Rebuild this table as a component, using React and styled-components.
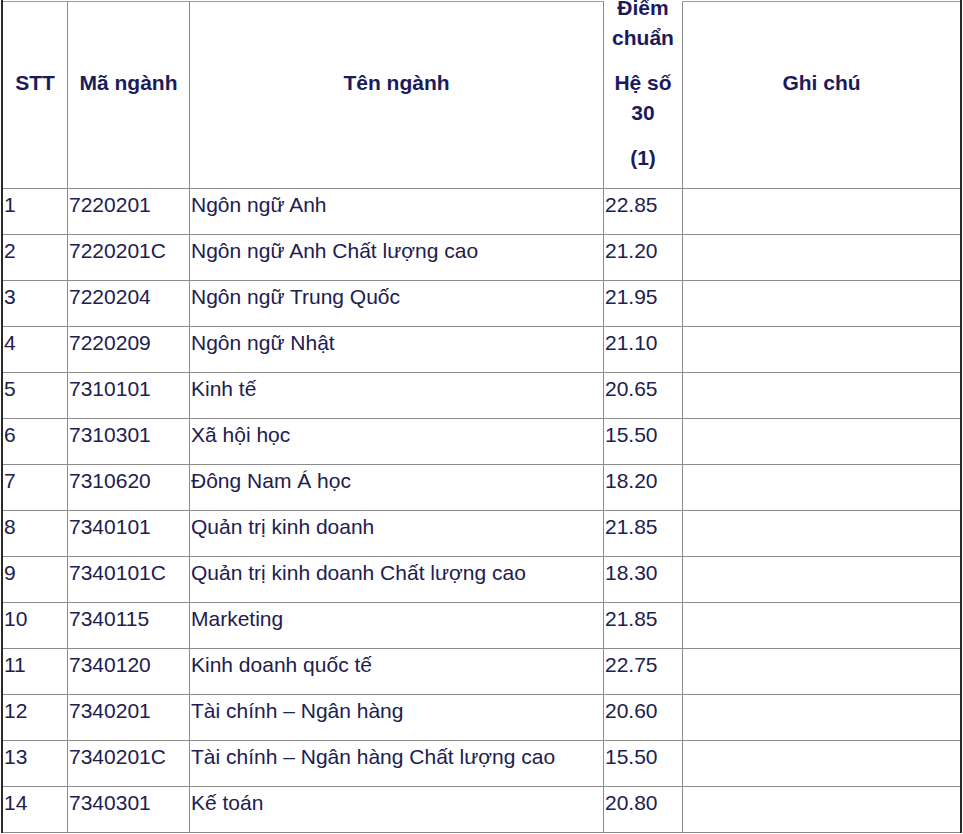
import React from "react";
import styled, { createGlobalStyle } from "styled-components";

const GlobalStyle = createGlobalStyle`
  html, body {
    margin: 0;
    padding: 0;
    background: #fff;
  }
  body {
    font-family: "Liberation Sans", Arial, sans-serif;
    overflow: hidden;
  }
`;

const rows = [
  ["1", "7220201", "Ngôn ngữ Anh", "22.85"],
  ["2", "7220201C", "Ngôn ngữ Anh Chất lượng cao", "21.20"],
  ["3", "7220204", "Ngôn ngữ Trung Quốc", "21.95"],
  ["4", "7220209", "Ngôn ngữ Nhật", "21.10"],
  ["5", "7310101", "Kinh tế", "20.65"],
  ["6", "7310301", "Xã hội học", "15.50"],
  ["7", "7310620", "Đông Nam Á học", "18.20"],
  ["8", "7340101", "Quản trị kinh doanh", "21.85"],
  ["9", "7340101C", "Quản trị kinh doanh Chất lượng cao", "18.30"],
  ["10", "7340115", "Marketing", "21.85"],
  ["11", "7340120", "Kinh doanh quốc tế", "22.75"],
  ["12", "7340201", "Tài chính – Ngân hàng", "20.60"],
  ["13", "7340201C", "Tài chính – Ngân hàng Chất lượng cao", "15.50"],
  ["14", "7340301", "Kế toán", "20.80"],
];

const Table = styled.div`
  margin-left: 1px;
  padding-top: 1px;
  width: 961px;
  border-left: 2px solid #2a2a2a;
  border-right: 2px solid #2a2a2a;
  box-sizing: border-box;
`;

const Row = styled.div`
  display: grid;
  grid-template-columns: 65px 122px 414px 79px 1fr;
  height: ${(p) => p.$height}px;
`;

const HeadCell = styled.div`
  display: flex;
  flex-direction: column;
  justify-content: center;
  align-items: center;
  padding: 0 2px 24px;
  border-top: ${(p) => (p.$noTop ? "1px solid transparent" : "1px solid #9a9a9a")};
  border-right: ${(p) => (p.$last ? "none" : "1px solid #8c8c8c")};
  border-bottom: 1px solid #8c8c8c;
  box-sizing: border-box;
  min-height: 0;
  font-weight: bold;
  font-size: 21px;
  line-height: 30px;
  color: #1b1b5c;
  text-align: center;
`;

const HeadLine = styled.p`
  margin: 0;
  & + & {
    margin-top: 15px;
  }
`;

const Cell = styled.div`
  padding: 4px 2px 0 1px;
  border-right: ${(p) => (p.$last ? "none" : "1px solid #8c8c8c")};
  border-bottom: 1px solid #8c8c8c;
  box-sizing: border-box;
  font-size: 21px;
  line-height: 24px;
  color: #20204f;
  white-space: nowrap;
  overflow: hidden;
`;

export default function App() {
  return (
    <>
      <GlobalStyle />
      <Table>
        <Row $height={188}>
          <HeadCell>STT</HeadCell>
          <HeadCell>Mã ngành</HeadCell>
          <HeadCell>Tên ngành</HeadCell>
          <HeadCell $noTop>
            <HeadLine>Điểm chuẩn</HeadLine>
            <HeadLine>Hệ số 30</HeadLine>
            <HeadLine>(1)</HeadLine>
          </HeadCell>
          <HeadCell $last>Ghi chú</HeadCell>
        </Row>
        {rows.map(([stt, code, name, score]) => (
          <Row key={stt} $height={46}>
            <Cell>{stt}</Cell>
            <Cell>{code}</Cell>
            <Cell>{name}</Cell>
            <Cell>{score}</Cell>
            <Cell $last />
          </Row>
        ))}
      </Table>
    </>
  );
}
